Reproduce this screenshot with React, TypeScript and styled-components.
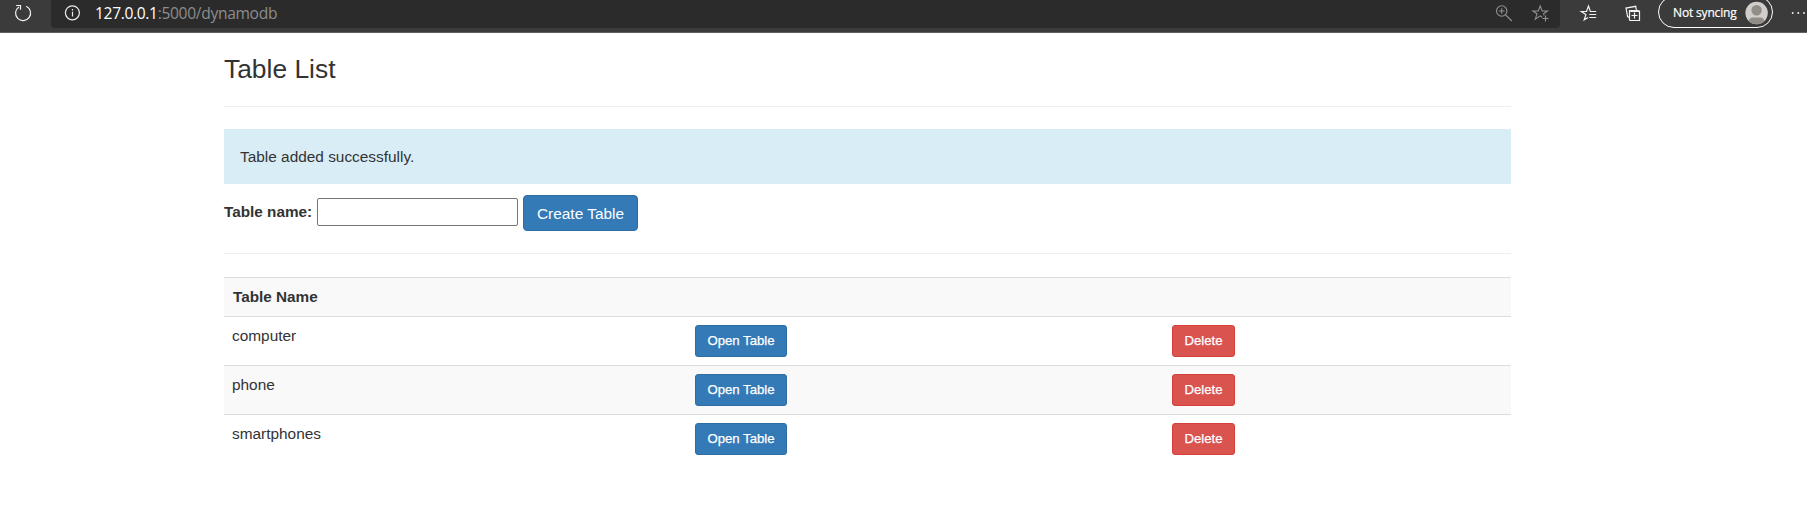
import React from "react";
import styled, { createGlobalStyle } from "styled-components";

const GlobalStyle = createGlobalStyle`
  * { box-sizing: border-box; }
  body {
    margin: 0;
    overflow: hidden;
    background: #fff;
    color: #333;
    font: 15.4px/22px "Liberation Sans", Arial, sans-serif;
  }
`;

const BrowserBar = styled.header`
  display: flex;
  height: 33px;
  background: #3b3b3b;
  border-bottom: 1px solid #606060;
  overflow: hidden;
`;

const ReloadSlot = styled.div`
  width: 51px;
  flex: none;
  svg { display: block; }
`;

const AddressBar = styled.div`
  display: flex;
  flex: none;
  width: 1509px;
  height: 28px;
  background: #2b2b2b;
  border-radius: 0 0 4px 4px;
  svg { display: block; flex: none; }
`;

const Url = styled.div`
  flex: 1;
  padding: 2px 0 0 4px;
  color: #8d8d8d;
  font: 15.6px/22px "Open Sans", "Noto Sans", sans-serif;
  letter-spacing: -0.32px;
  white-space: nowrap;
`;

const Host = styled.span`
  color: #fff;
  letter-spacing: -0.35px;
`;

const Tools = styled.div`
  display: flex;
  flex: none;
  width: 247px;
  svg { display: block; flex: none; }
`;

const ProfilePill = styled.div`
  display: flex;
  flex: none;
  width: 115px;
  height: 32px;
  margin-top: -4px;
  padding-left: 14px;
  border: 1px solid #fff;
  border-radius: 16px;
  color: #fff;
  font: 12px/32px "Open Sans", "Noto Sans", sans-serif;
  white-space: nowrap;
`;

const PillText = styled.span`
  width: 72px;
  flex: none;
  letter-spacing: -0.16px;
  -webkit-text-stroke: 0.2px #fff;
`;

const Page = styled.main`
  width: 1287px;
  margin-left: 224px;
`;

const Title = styled.h3`
  margin: 0;
  padding-top: 22px;
  height: 73px;
  font-size: 26.4px;
  line-height: 29px;
  font-weight: 400;
`;

const Rule = styled.hr<{ $after: number }>`
  height: 1px;
  margin: 0 0 ${(p) => p.$after}px;
  border: 0;
  background: #eee;
`;

const Alert = styled.div`
  height: 55px;
  padding: 17px 16px;
  background: #d9edf7;
`;

const CreateForm = styled.form`
  display: flex;
  align-items: flex-start;
  height: 69px;
  padding-top: 11px;
`;

const Label = styled.label`
  width: 93px;
  padding-top: 6px;
  font-weight: 700;
  font-size: 15.3px;
`;

const NameInput = styled.input`
  width: 201px;
  height: 28px;
  margin: 3px 5px 0 0;
  border: 1px solid #767676;
  border-radius: 2px;
  background: #fff;
`;

const Button = styled.button<{ $tone?: "danger"; $small?: boolean }>`
  display: block;
  width: ${(p) => (p.$small ? (p.$tone ? 63 : 92) : 115)}px;
  height: ${(p) => (p.$small ? 32 : 36)}px;
  padding: ${(p) => (p.$small ? "0 0 1px" : "1px 0 0")};
  border: 1px solid ${(p) => (p.$tone ? "#d43f3a" : "#2e6da4")};
  border-radius: ${(p) => (p.$small ? 3 : 4)}px;
  background: ${(p) => (p.$tone ? "#d9534f" : "#337ab7")};
  color: #fff;
  font: ${(p) => (p.$small ? "13.2px/20px" : "15.4px/22px")} "Liberation Sans", Arial, sans-serif;
  -webkit-text-stroke: ${(p) => (p.$small ? "0.25px #fff" : "0")};
  white-space: nowrap;
`;

const Table = styled.table`
  width: 100%;
  table-layout: fixed;
  border-spacing: 0;
`;

const Row = styled.tr<{ $striped?: boolean; $header?: boolean }>`
  height: ${(p) => (p.$header ? 39 : 49)}px;
  background: ${(p) => (p.$striped ? "#f9f9f9" : "#fff")};
`;

const HeaderCell = styled.th<{ $width?: number }>`
  width: ${(p) => (p.$width ? `${p.$width}px` : "auto")};
  padding: 8px 9px;
  border-top: 1px solid #ddd;
  text-align: left;
  vertical-align: top;
  font-size: 15.3px;
`;

const Cell = styled.td`
  padding: 8px 8px 7px;
  border-top: 1px solid #ddd;
  vertical-align: top;
`;

const names = ["computer", "phone", "smartphones"];

const ReloadIcon = () => (
  <svg width="51" height="28" fill="none" stroke="#f2f2f2" strokeWidth="1.2">
    <path d="M26.2 6.3A7.5 7.5 0 1 1 18.9 6.9" />
    <path d="M16.1 5.5H20.5V9.8" />
  </svg>
);

const InfoIcon = () => (
  <svg width="40" height="28" fill="none" stroke="#ededed" strokeWidth="1.2">
    <circle cx="21.4" cy="12.8" r="7" />
    <path d="M21.5 11.8V16.5M21.5 9V10.4" />
  </svg>
);

const AddressIcons = () => (
  <svg width="100" height="28" fill="none" stroke="#929292" strokeWidth="1.1">
    <circle cx="41.7" cy="11" r="5.2" />
    <path d="M45.6 14.8L51.8 21M38.9 11H44.5M41.7 8.2V13.8" />
    <path d="M82.3 17.2L80.2 15.8L75.3 19.1L77 13.8L72.9 11H78.2L80.2 6L82.2 11H87.4L83.6 13.8L84.1 15.4M82.5 18.5H88.5M85.5 15.5V21.5" />
  </svg>
);

const BrowserIcons = () => (
  <svg width="98" height="32" fill="none" stroke="#f2f2f2" strokeWidth="1.2">
    <path d="M28 17.4L24.2 19.8L25.9 14.6L21.3 11.5H26.5L28.5 6L30.4 11.5H36.2M29.3 14.5H36.2M29.3 17.5H36.2" />
    <path d="M70.3 11.5H79.5V20.5H70.3Q69.5 20.5 69.5 19.7V10.5H78.5Q79.5 10.5 79.5 11.5M74.5 12.5V18.5M71.5 15.5H77.5" />
    <path d="M69.2 17.4L67.6 16.6L66 8.1L75.7 6.3L76.4 9.8" />
  </svg>
);

const Avatar = () => (
  <svg width="27" height="30" viewBox="0 0 27 30">
    <defs><clipPath id="avatar"><circle cx="11.6" cy="16" r="11.2" /></clipPath></defs>
    <g clipPath="url(#avatar)">
      <rect width="27" height="30" fill="#d0cdca" />
      <circle cx="11.6" cy="13.2" r="5.2" fill="#918d89" />
      <path d="M4 26V24Q4 20.5 8 20.5H15Q19 20.5 19 24V28H4Z" fill="#918d89" />
    </g>
  </svg>
);

const MoreIcon = () => (
  <svg width="34" height="30" fill="#f2f2f2">
    <circle cx="19.7" cy="13" r=".95" />
    <circle cx="25.3" cy="13" r=".95" />
    <circle cx="31" cy="13" r=".95" />
  </svg>
);

export default function App() {
  return (
    <>
      <GlobalStyle />
      <BrowserBar>
        <ReloadSlot><ReloadIcon /></ReloadSlot>
        <AddressBar>
          <InfoIcon />
          <Url><Host>127.0.0.1</Host>:5000/dynamodb</Url>
          <AddressIcons />
        </AddressBar>
        <Tools>
          <BrowserIcons />
          <ProfilePill><PillText>Not syncing</PillText><Avatar /></ProfilePill>
          <MoreIcon />
        </Tools>
      </BrowserBar>
      <Page>
        <Title>Table List</Title>
        <Rule $after={22} />
        <Alert>Table added successfully.</Alert>
        <CreateForm onSubmit={(e) => e.preventDefault()}>
          <Label htmlFor="table-name">Table name:</Label>
          <NameInput id="table-name" />
          <Button>Create Table</Button>
        </CreateForm>
        <Rule $after={23} />
        <Table>
          <thead>
            <Row $striped $header>
              <HeaderCell $width={463}>Table Name</HeaderCell>
              <HeaderCell $width={477} />
              <HeaderCell />
            </Row>
          </thead>
          <tbody>
            {names.map((name, i) => (
              <Row key={name} $striped={i % 2 === 1}>
                <Cell>{name}</Cell>
                <Cell><Button $small>Open Table</Button></Cell>
                <Cell><Button $small $tone="danger">Delete</Button></Cell>
              </Row>
            ))}
          </tbody>
        </Table>
      </Page>
    </>
  );
}
